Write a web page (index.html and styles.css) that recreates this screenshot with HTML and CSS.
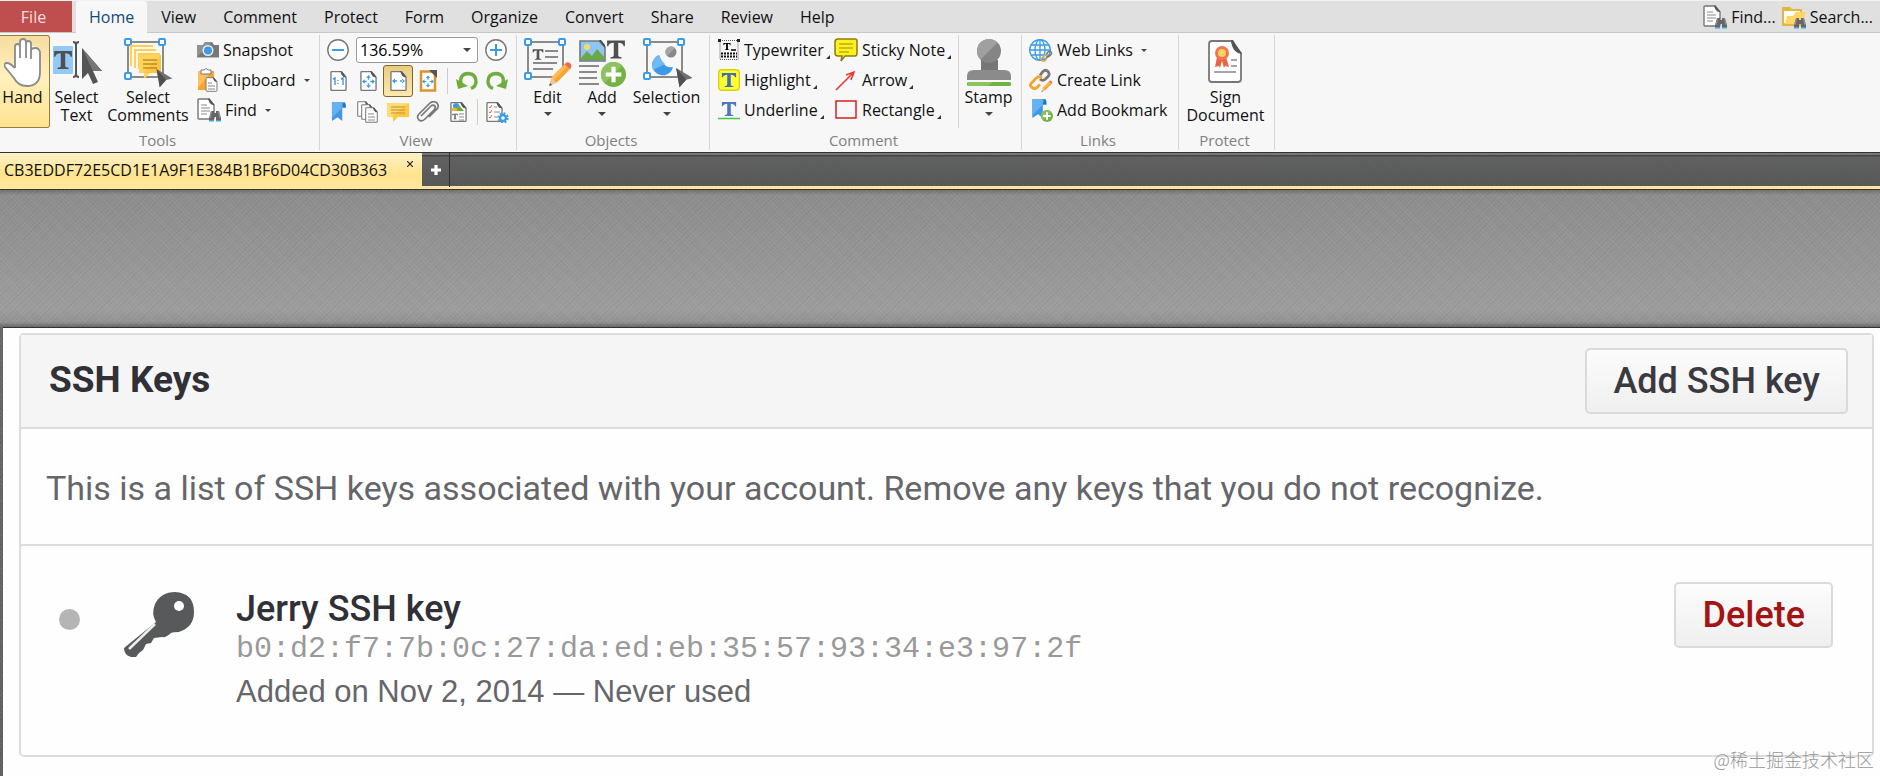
FILE: index.html
```
<!DOCTYPE html>
<html lang="en">
<head>
<meta charset="utf-8">
<title>SSH Keys</title>
<link rel="stylesheet" href="styles.css">
</head>
<body>
<svg class="defs" aria-hidden="true">
  <symbol id="page" viewBox="0 0 18 22"><path d="M1 2q0-1 1-1h10l5 6v13q0 1-1 1H2q-1 0-1-1z" fill="#fff" stroke="#777" stroke-width="1.4"/><path d="M11 .6h1.500L17.500 7q-5 1-6.500-6.400z" fill="#555"/></symbol>
  <symbol id="binoculars" viewBox="0 0 12 12"><path d="M2 1h3v2h2V1h3l2 7v2H7V7H5v3H0V8z" fill="#666"/><path d="M2.500 1.500L1 8M9.500 1.500L11 8" stroke="#999"/><path d="M0 10h5v1.500H0zM7 10h5v1.500H7z" fill="#4a9de0"/></symbol>
  <symbol id="find" viewBox="0 0 24 24"><use href="#page" x="0" y="0" width="18" height="22"/><path d="M4 7h6M4 10h9M4 13h9M4 16h6" stroke="#888"/><use href="#binoculars" x="12" y="12" width="12" height="12"/></symbol>
  <symbol id="frame" viewBox="0 0 44 44"><path d="M4 4h35v35H4z" fill="none" stroke="#8a8a8a" stroke-width="2"/><g fill="#fff" stroke="#3b9be8" stroke-width="2"><rect x="1" y="1" width="6" height="6" rx="1"/><rect x="35" y="1" width="6" height="6" rx="1"/><rect x="1" y="35" width="6" height="6" rx="1"/></g></symbol>
  <symbol id="arrows" viewBox="0 0 14 14"><g fill="#3b9be8"><path d="M7 0l2.500 3h-5zM7 14l2.500-3h-5zM0 7l3-2.500v5zM14 7l-3-2.500v5z"/><path d="M6.300 2h1.400v3H6.300zM6.300 9h1.400v3H6.300zM2 6.300h3v1.400H2zM9 6.300h3v1.400H9z"/></g></symbol>
  <symbol id="chain" viewBox="0 0 24 24"><g fill="none" stroke-width="3"><path d="M12 8l3-4q3-3 6 0 2 3 0 5l-3 3q-3 3-6 0" stroke="#777"/><path d="M14 11q-3-3-6 0l-5 5q-3 3 0 5 3 3 6 0l3-3" stroke="#f5a32a"/></g></symbol>
  <symbol id="pencil" viewBox="0 0 24 24"><path d="M3 16L16 3l5 5L8 21z" fill="#f8a32e"/><path d="M3 16L16 3l2.500 2.500-13 13z" fill="#ffb955"/><path d="M16 3q2-3 5-1 3 3 0 6z" fill="#ea6c4b"/><path d="M3 16l5 5-7 3z" fill="#e8c99a"/><path d="M2 21l2 2-3 1z" fill="#555"/></symbol>
  <symbol id="plus" viewBox="0 0 24 24"><circle cx="12" cy="12" r="12" fill="#74b243"/><path d="M3.500 20.500A12 12 0 0 1 20.500 3.500z" fill="#8cc262"/><path d="M12 4.500v15M4.500 12h15" stroke="#fff" stroke-width="4"/></symbol>
  <symbol id="ribbonmark" viewBox="0 0 16 21"><path d="M1 0h13q-2 2-2 5v15l-5-4-6 4z" fill="#3f97e6"/><path d="M1 0h11v6L1 17z" fill="#65b1f2"/><path d="M12 6q0-5 2-6 2 0 2 6z" fill="#2378c0"/></symbol>
  <symbol id="cursor" viewBox="0 0 20 24"><path d="M0 0l20 12-8 2-8 9z" fill="#707070"/><path d="M0 0l12 14-8 9z" fill="#505050"/></symbol>
  <symbol id="tletter" viewBox="0 0 18 18"><path d="M1 1h16v5h-1q-1-3-5-3v11q0 2 3 2v1H4v-1q3 0 3-2V3Q3 3 2 6H1z"/></symbol>
  <symbol id="undo" viewBox="0 0 22 22"><path d="M5 14Q3 4 12 3.500q8 .5 8 8 0 5-5 7" fill="none" stroke="#6fae3e" stroke-width="3.400"/><path d="M0 9l2 10 10-3z" fill="#6fae3e"/></symbol>
</svg>

<header class="app">
  <nav class="menubar">
    <button class="menu file">File</button>
    <button class="menu active">Home</button>
    <button class="menu">View</button>
    <button class="menu">Comment</button>
    <button class="menu">Protect</button>
    <button class="menu">Form</button>
    <button class="menu">Organize</button>
    <button class="menu">Convert</button>
    <button class="menu">Share</button>
    <button class="menu">Review</button>
    <button class="menu">Help</button>
    <div class="quick">
      <button class="tool"><svg width="24" height="24"><use href="#find"/></svg>Find...</button>
      <button class="tool"><svg width="24" height="24" viewBox="0 0 24 24"><path d="M0 2h8l2 2h10v17H0z" fill="#e5b53c"/><path d="M2 6h16v12H2z" fill="#fff"/><path d="M3 19l2-8h6l3-4h10l-4 12z" fill="#ffd564"/><use href="#binoculars" x="12" y="12" width="12" height="12"/></svg>Search...</button>
    </div>
  </nav>

  <div class="ribbon">
    <section class="group g-tools">
      <div class="body">
        <button class="big on"><svg width="38" height="50" viewBox="0 0 38 50"><path d="M11 27V8q0-3 2.500-3T16 8V4q0-3 3-3t3 3v3q0-3 2.500-3T27 7v4q0-3 2.500-3T32 11l3 0q1 4 1 8v15q0 14-13 14-9 0-13-8L1 28q-2-4 2-4 3 0 8 6z" fill="#fff"/><path d="M11 30V9q0-3 2.500-3T16 9v11V4q0-3 3-3t3 3v16V6q0-3 2.500-3T27 6v15-8q0-3 4-3t5 4v20q0 14-13 14-9 0-13-8L1 29q-2-4 2-4 3 0 8 5" fill="none" stroke="#8b8b8b" stroke-width="1.800"/></svg><span>Hand</span></button>
        <button class="big w-text"><svg width="50" height="50" viewBox="0 0 50 50"><rect x="1" y="8" width="20" height="28" rx="1" fill="#92c9f8"/><use href="#tletter" x="1" y="11" width="20" height="22" fill="#505050"/><path d="M21 4q3 0 3 3v29q0 3-3 3M27 4q-3 0-3 3v29q0 3 3 3" fill="none" stroke="#555" stroke-width="2"/><path d="M30 10l20 23-9 0 5 11-5 2-5-11-6 6z" fill="#555"/><path d="M30 10l20 23-9 0z" fill="#777"/></svg><span>Select<br>Text</span></button>
        <button class="big w-comm"><svg width="50" height="50" viewBox="0 0 50 50"><use href="#frame" x="1" y="0" width="44" height="44"/><path d="M8 28V8h22M12 30V12h21M16 31V16h21" fill="none" stroke="#ffcf50" stroke-width="2"/><path d="M16 17h22v18H27l-6 6v-6h-5z" fill="#ffd45c"/><path d="M38 17v18H20z" fill="#fbc545"/><path d="M20 22h14M20 26h14M20 30h14" stroke="#c48b20" stroke-width="1.500"/><use href="#cursor" x="33" y="31" width="17" height="19"/></svg><span>Select<br>Comments</span></button>
        <div class="rows">
          <button class="tool"><svg width="22" height="24" viewBox="0 0 22 24"><path d="M0 7h6l2-3h7l2 3h5v12H0z" fill="#777"/><path d="M0 7h6l2-3h7L0 19z" fill="#919191"/><path d="M0 19h22v1H0z" fill="#bbb"/><circle cx="11" cy="12.500" r="5.500" fill="#eee"/><circle cx="11" cy="12.500" r="4" fill="#3b9be8"/></svg>Snapshot</button>
          <button class="tool"><svg width="22" height="24" viewBox="0 0 22 24"><path d="M1 3h16v19H1z" fill="#f6a52f"/><path d="M1 3h14L1 20z" fill="#ffbf5a"/><path d="M4 2h3q2-3 4 0h3v4H4z" fill="#fff" stroke="#777"/><use href="#page" x="8" y="9" width="13" height="15"/><path d="M11 15h4M11 18h7M11 21h7" stroke="#888"/></svg>Clipboard<i class="drop"></i></button>
          <button class="tool"><svg width="24" height="24"><use href="#find"/></svg>Find<i class="drop"></i></button>
        </div>
      </div>
      <h2>Tools</h2>
    </section>

    <section class="group g-view">
      <div class="body view">
        <div class="line first">
          <button class="ic" aria-label="Zoom out"><svg width="22" height="22" viewBox="0 0 22 22"><circle cx="11" cy="11" r="10.200" fill="#fff" stroke="#777" stroke-width="1.400"/><path d="M5 11h12" stroke="#3b9be8" stroke-width="2"/></svg></button>
          <label class="zoom"><input aria-label="Zoom level" value="136.59%"><i class="drop"></i></label>
          <button class="ic" aria-label="Zoom in"><svg width="22" height="22" viewBox="0 0 22 22"><circle cx="11" cy="11" r="10.200" fill="#fff" stroke="#777" stroke-width="1.400"/><path d="M5 11h12M11 5v12" stroke="#3b9be8" stroke-width="2"/></svg></button>
        </div>
        <div class="line second">
          <button class="ic" aria-label="Actual size"><svg width="22" height="22" viewBox="0 0 22 22"><use href="#page" x="3" y="0" width="17" height="22"/><path d="M6 9l2-1v7M14 9l2-1v7M11 10v1M11 13v1" fill="none" stroke="#3b9be8" stroke-width="1.400"/></svg></button>
          <button class="ic" aria-label="Fit page"><svg width="22" height="22" viewBox="0 0 22 22"><use href="#page" x="3" y="0" width="17" height="22"/><use href="#arrows" x="5" y="5" width="13" height="13"/></svg></button>
          <button class="ic pressed" aria-label="Fit width"><svg width="22" height="22" viewBox="0 0 22 22"><use href="#page" x="3" y="0" width="17" height="22"/><path d="M5 11l3-2.500v5zM18 11l-3-2.500v5zM7 10.300h3v1.400H7zM13 10.300h3v1.400h-3z" fill="#3b9be8"/></svg></button>
          <button class="ic" aria-label="Fit visible"><svg width="22" height="22" viewBox="0 0 22 22"><path d="M4 1.500h14v19H4z" fill="#fff" stroke="#dd942e" stroke-width="2.500"/><path d="M12 0h8v8z" fill="#555"/><use href="#arrows" x="5" y="5" width="12" height="13"/></svg></button>
          <i class="vsep"></i>
          <button class="ic" aria-label="Rotate left"><svg width="22" height="22"><use href="#undo"/></svg></button>
          <button class="ic" aria-label="Rotate right"><svg width="22" height="22" viewBox="0 0 22 22"><g transform="matrix(-1 0 0 1 22 0)"><use href="#undo" width="22" height="22"/></g></svg></button>
        </div>
        <div class="line third">
          <button class="ic" aria-label="Bookmarks"><svg width="22" height="22" viewBox="0 0 22 22"><use href="#ribbonmark" x="4" y="1" width="15" height="20"/></svg></button>
          <button class="ic" aria-label="Thumbnails"><svg width="22" height="22" viewBox="0 0 22 22"><use href="#page" x="0" y="0" width="13" height="16"/><use href="#page" x="4" y="3" width="13" height="16"/><use href="#page" x="8" y="6" width="13" height="16"/><path d="M11 13h6M11 16h7M11 19h7" stroke="#888"/></svg></button>
          <button class="ic" aria-label="Comments"><svg width="22" height="22" viewBox="0 0 22 22"><path d="M0 2h22v14H11l-5 5v-5H0z" fill="#ffc83e"/><path d="M0 2h22L4 16H0z" fill="#ffdb75"/><path d="M4 6h14M4 9h14M4 12h14" stroke="#c0902c" stroke-width="1.200"/></svg></button>
          <button class="ic" aria-label="Attachments"><svg width="24" height="22" viewBox="0 0 24 22"><path d="M5 15L15 5q2-2 4 0 1 2-1 4L9 18q-3 3-6 1-3-3 0-6L13 3q4-4 8-1 3 4-1 7l-7 7" fill="none" stroke="#777" stroke-width="1.700"/></svg></button>
          <button class="ic" aria-label="Content"><svg width="22" height="22" viewBox="0 0 22 22"><use href="#page" x="3" y="0" width="17" height="22"/><circle cx="9" cy="5" r="3" fill="#3b9be8"/><path d="M7 10l5-6 5 6z" fill="#6fae3e"/><path d="M5 7h5v3H5z" fill="#f5b32a"/><use href="#tletter" x="5" y="12" width="6" height="7" fill="#555"/><path d="M12 13h5M12 16h5M12 19h5" stroke="#888"/></svg></button>
          <i class="vsep"></i>
          <button class="ic" aria-label="Properties"><svg width="24" height="22" viewBox="0 0 24 22"><use href="#page" x="1" y="0" width="17" height="22"/><path d="M4 6l1 1 2-3M4 11l1 1 2-3M4 16l1 1 2-3" fill="none" stroke="#ea5b3c"/><path d="M9 6h3M9 11h6M9 16h3" stroke="#888"/><circle cx="18" cy="17" r="3" fill="#fff" stroke="#3b9be8" stroke-width="2.400"/><circle cx="18" cy="17" r="4.800" fill="none" stroke="#3b9be8" stroke-width="1.800" stroke-dasharray="1.900 1.870"/></svg></button>
        </div>
      </div>
      <h2>View</h2>
    </section>

    <section class="group g-objects">
      <div class="body">
        <button class="big w-edit"><svg width="50" height="50" viewBox="0 0 50 50"><use href="#frame" x="1" y="0" width="44" height="44"/><use href="#tletter" x="9" y="10" width="12" height="13" fill="#555"/><path d="M22 13h13M22 19h13M10 25h24M10 31h20" stroke="#8a8a8a" stroke-width="2"/><path d="M25 47L45 24h5v26H25z" fill="#f7f7f7"/><use href="#pencil" x="25" y="23" width="25" height="25"/></svg><span>Edit</span><i class="drop"></i></button>
        <button class="big w-add"><svg width="50" height="50" viewBox="0 0 50 50"><path d="M3 3h19l6 6v14H3z" fill="#8ec5f2" stroke="#777" stroke-width="1.600"/><path d="M22 2h2l4 5v3z" fill="#444"/><circle cx="10" cy="9" r="3" fill="#ffd86b"/><path d="M4 20l6-7 5 5 5-7 7 8v3H4z" fill="#6aa84a"/><use href="#tletter" x="29" y="1" width="20" height="21" fill="#505050"/><path d="M2 28h20M2 34h18M2 40h18M2 46h20" stroke="#8a8a8a" stroke-width="2"/><use href="#plus" x="24" y="24" width="25" height="25"/></svg><span>Add</span><i class="drop"></i></button>
        <button class="big w-sel"><svg width="50" height="50" viewBox="0 0 50 50"><use href="#frame" x="1" y="0" width="44" height="44"/><path d="M17 17a10.500 10.500 0 1 0 14 12q-6 1-9-3t-5-9z" fill="#3b9be8"/><path d="M17 17q-10 6-6 15l12-6q-4-3-6-9z" fill="#71b9f3"/><circle cx="29" cy="14" r="5.500" fill="#888"/><path d="M25 18a5.500 5.500 0 0 1 8-8z" fill="#a5a5a5"/><use href="#cursor" x="34" y="30" width="17" height="20"/></svg><span>Selection</span><i class="drop"></i></button>
      </div>
      <h2>Objects</h2>
    </section>

    <section class="group g-comment">
      <div class="body">
        <div class="rows c1">
          <button class="tool"><svg width="22" height="24" viewBox="0 0 22 24"><path d="M2 2.500h18v19H2z" fill="none" stroke="#555" stroke-dasharray="1 1"/><path d="M0 1h3v3H0zM19 1h3v3h-3z" fill="#222"/><use href="#tletter" x="5" y="4" width="8" height="9"/><path d="M13 12h5" stroke="#000" stroke-width="1.500"/><path d="M3 15.500h16M3 18.500h16" stroke="#111" stroke-width="2" stroke-dasharray="2 1"/></svg>Typewriter<i class="more"></i></button>
          <button class="tool"><svg width="22" height="24" viewBox="0 0 22 24"><rect x=".7" y="1.700" width="20.600" height="20.600" rx="3" fill="#ff3" stroke="#d9d400" stroke-width="1.400"/><use href="#tletter" x="3" y="4" width="16" height="16" fill="#436cb4"/></svg>Highlight<i class="more"></i></button>
          <button class="tool"><svg width="22" height="24" viewBox="0 0 22 24"><use href="#tletter" x="3" y="3" width="16" height="16" fill="#4c76c0"/><path d="M0 20.500h22" stroke="#3cc83c" stroke-width="1.500"/></svg>Underline<i class="more"></i></button>
        </div>
        <div class="rows c2">
          <button class="tool"><svg width="24" height="24" viewBox="0 0 24 24"><path d="M4 1h17q2 0 2 2v12q0 3-2 3H11l-4 5 1-5H4q-3 0-3-3V4q0-3 3-3z" fill="#fff21c" stroke="#8a7c14" stroke-width="1.500"/><path d="M5 6h14M5 10h14M5 14h10" stroke="#9a8c20" stroke-width="1.200"/></svg>Sticky Note<i class="more"></i></button>
          <button class="tool"><svg width="24" height="24" viewBox="0 0 24 24"><path d="M2 22L20 4M12 7l8-3-3 8" fill="none" stroke="#e33" stroke-width="1.600"/></svg>Arrow<i class="more"></i></button>
          <button class="tool"><svg width="24" height="24" viewBox="0 0 24 24"><path d="M2 3h20v17H2z" fill="none" stroke="#d42222" stroke-width="1.500"/></svg>Rectangle<i class="more"></i></button>
        </div>
        <button class="big w-stamp"><svg width="50" height="50" viewBox="0 0 50 50"><path d="M17 22h17v10H17z" fill="#777"/><path d="M3 42v-4q0-6 7-6h30q7 0 7 6v4z" fill="#8b8b8b"/><circle cx="25" cy="13" r="12" fill="#858585"/><path d="M16.500 21.500A12 12 0 0 1 33.500 4.500z" fill="#a0a0a0"/><rect x="3" y="44" width="44" height="4" rx="1.500" fill="#71b144"/><path d="M4 44h25l-5 4H4z" fill="#8bc360"/></svg><span>Stamp</span><i class="drop"></i></button>
      </div>
      <h2>Comment</h2>
    </section>

    <section class="group g-links">
      <div class="body">
        <div class="rows">
          <button class="tool"><svg width="24" height="24" viewBox="0 0 24 24"><g fill="none" stroke="#3b9be8" stroke-width="1.300"><circle cx="11" cy="12" r="10.300"/><ellipse cx="11" cy="12" rx="5" ry="10.300"/><path d="M11 2v20M1 12h20M2 7h18M2 17h18"/></g><use href="#chain" x="11" y="12" width="13" height="12"/></svg>Web Links<i class="drop"></i></button>
          <button class="tool"><svg width="24" height="24" viewBox="0 0 24 24"><use href="#chain" x="0" y="0" width="22" height="22"/><use href="#pencil" x="12" y="12" width="12" height="12"/></svg>Create Link</button>
          <button class="tool"><svg width="24" height="24" viewBox="0 0 24 24"><use href="#ribbonmark" x="2" y="1" width="16" height="20"/><use href="#plus" x="12" y="12" width="12" height="12"/></svg>Add Bookmark</button>
        </div>
      </div>
      <h2>Links</h2>
    </section>

    <section class="group g-protect">
      <div class="body">
        <button class="big w-sign"><svg width="46" height="50" viewBox="3 0 46 50"><path d="M9 6q0-3 3-3h19l10 12v26q0 3-3 3H12q-3 0-3-3z" fill="#fff" stroke="#777" stroke-width="1.800"/><path d="M31 2h2l9 14q-10-1-11-14z" fill="#555"/><path d="M17 19l-2 10 4-1 1 2 2-7 2 7 1-2 4 1-3-10z" fill="#ea6546"/><circle cx="22" cy="15" r="5.500" fill="#ffd25c" stroke="#ef7355" stroke-width="3"/><path d="M31 22h6M31 28h6M14 34h22" stroke="#888" stroke-width="1.600"/></svg><span>Sign<br>Document</span></button>
      </div>
      <h2>Protect</h2>
    </section>
  </div>
</header>

<div class="doctabs">
  <div class="doctab"><span>CB3EDDF72E5CD1E1A9F1E384B1BF6D04CD30B363</span><button class="close" aria-label="Close tab"><svg width="6" height="6" viewBox="0 0 6 6"><path d="M0 0l6 6M6 0L0 6" stroke="#222" stroke-width="1.200"/></svg></button></div>
  <button class="newtab" aria-label="New tab"><svg width="10" height="10" viewBox="0 0 10 10"><path d="M5 0v10M0 5h10" stroke="#fff" stroke-width="3.200"/></svg></button>
</div>

<main class="workspace">
  <div class="sheet">
    <section class="panel">
      <div class="panel-head"><h1>SSH Keys</h1><button class="btn">Add SSH key</button></div>
      <p class="intro">This is a list of SSH keys associated with your account. Remove any keys that you do not recognize.</p>
      <div class="key">
        <i class="status"></i>
        <svg class="keyicon" width="74" height="68" viewBox="0 0 74 68"><path d="M34 31Q29 23 33 13 39 1 53 1q19 1 19 20 0 15-15 20-6 0-8 1-5 5-9 4l-8 1-3 5-5 1-3 6-4 3-3 4H9q-7-2-7-9z" fill="#58595b"/><circle cx="57" cy="15" r="5" fill="#fff"/><path d="M7 58L33 33" stroke="#eee" stroke-width="2.500"/></svg>
        <div class="info">
          <strong>Jerry SSH key</strong>
          <code>b0:d2:f7:7b:0c:27:da:ed:eb:35:57:93:34:e3:97:2f</code>
          <span>Added on Nov 2, 2014 — Never used</span>
        </div>
        <button class="btn danger">Delete</button>
      </div>
    </section>
    <div class="watermark">@稀土掘金技术社区</div>
  </div>
</main>
</body>
</html>
```
FILE: styles.css
```
* { box-sizing: border-box; }
body {
  margin: 0;
  min-height: 100vh;
  display: flex;
  flex-direction: column;
  overflow-x: hidden;
  font-family: "Open Sans", "Noto Sans", sans-serif;
  font-size: 16px;
  color: #111;
  background: #666;
}
.defs { position: absolute; width: 0; height: 0; }
button { font: inherit; color: inherit; border: 0; padding: 0; margin: 0; background: none; }
svg { display: block; flex: none; }
h1, h2, p { margin: 0; }

.menubar {
  display: flex;
  gap: 1px;
  height: 33px;
  background: #e0e0e0;
  border-top: 1px solid #f2f2f2;
  border-bottom: 1px solid #c8c8c8;
}
.menu { padding: 0 13px; line-height: 30px; }
.file { width: 72px; margin-right: 3px; background: #bf4e4e; color: #f7dede; padding-right: 18px; }
.active { height: 32px; background: #f7f7f7; color: #0f4a7c; border-radius: 3px 3px 0 0; }
.quick { display: flex; gap: 6px; margin-left: auto; padding-right: 7px; }

.tool { display: flex; align-items: center; gap: 4px; white-space: nowrap; line-height: 30px; }
.drop {
  flex: none;
  border: 3px solid transparent;
  border-top-color: #444;
  border-bottom: 0;
}
.tool .drop { margin-left: 4px; }
.more { border: 2px solid #333; border-top-color: transparent; border-left-color: transparent; margin-top: 14px; margin-left: -2px; }

.ribbon { display: flex; height: 119px; padding-top: 2px; background: #f7f7f7; }
.group {
  flex: none;
  display: flex;
  flex-direction: column;
  height: 115px;
  border-right: 1px solid #d5d5d5;
}
.body { display: flex; flex: none; height: 93px; }
.group h2 { font-size: 15px; font-weight: 400; line-height: 24px; color: #808080; text-align: center; padding-right: 4px; }
.g-tools { width: 320px; }
.g-view { width: 197px; }
.g-objects { width: 193px; }
.g-comment { width: 312px; }
.g-links { width: 157px; }
.g-protect { width: 96px; }
.rows { display: grid; grid-template-rows: repeat(3, 30px); justify-items: start; }
.big {
  display: flex;
  flex-direction: column;
  align-items: center;
  padding-top: 3px;
  text-align: center;
  line-height: 18px;
  white-space: nowrap;
}
.big .drop { margin-top: 6px; border-width: 4px; border-bottom: 0; }
.on { width: 50px; border: 1px solid #9a7c3a; border-left: 0; border-radius: 0 3px 3px 0; background: linear-gradient(#f6dda0, #fff0bd 45%, #ffe391); padding: 2px 4px 0 0; }
.w-text { width: 53px; }
.w-comm { width: 90px; }
.g-tools .rows { margin-left: 4px; }
.w-edit { width: 61px; }
.w-add { width: 48px; }
.w-sel { width: 81px; }
.g-comment .body { padding-left: 8px; }
.g-links .body { padding-left: 7px; }
.c1 { width: 116px; }
.c2 { width: 124px; }
.w-stamp { flex: 1; border-left: 1px solid #d5d5d5; padding-right: 3px; }
.w-sign { width: 93px; }

.view { flex-direction: column; padding: 0 5px 0 3px; }
.line { display: grid; align-items: center; justify-items: center; height: 32px; }
.first { grid-template-columns: 30px 1fr 30px; height: 30px; }
.second { grid-template-columns: repeat(4, 30px) 9px repeat(2, 30px); }
.third { grid-template-columns: repeat(5, 30px) 9px 30px; }
.line .ic { display: flex; }
.line .pressed { padding: 4px 3px; border: 1px solid #80642c; border-radius: 3px; background: linear-gradient(#e8cd80, #fbe9ac); }
.vsep { width: 1px; height: 26px; background: #ccc; }
.zoom { display: flex; align-items: center; width: 122px; height: 26px; padding: 0 6px 0 3px; border: 1px solid #999; border-radius: 3px; background: #fff; }
.zoom input { flex: 1; min-width: 0; border: 0; padding: 0; font: inherit; background: none; outline: 0; }
.zoom .drop { border-width: 4px; border-bottom: 0; }

.doctabs {
  display: flex;
  flex: none;
  height: 38px;
  border-top: 1px solid #333;
  border-bottom: 1px solid #3a3424;
  background:
    linear-gradient(#fae5a4, #fae5a4) bottom / 100% 3px no-repeat,
    linear-gradient(#303030, #303030) 0 33px / 100% 1px no-repeat,
    repeating-linear-gradient(45deg, rgba(255,255,255,.02) 0 1px, transparent 1px 3px),
    linear-gradient(#777 0 2px, #444 2px 3px, #606060 4px, #545555);
}
.doctab { display: flex; justify-content: space-between; width: 422px; padding: 0 9px 0 4px; line-height: 34px; background: linear-gradient(#fff1c8, #ffe38e 60%, #ffe7a0); }
.close { align-self: flex-start; padding-top: 8px; }
.newtab { display: grid; place-items: center; width: 28px; height: 34px; border-right: 1px solid #303030; }

.workspace {
  flex: 1;
  display: flex;
  padding: 137px 0 0 3px;
  background:
    repeating-linear-gradient(45deg, rgba(255,255,255,.05) 0 1px, transparent 1px 3px),
    repeating-linear-gradient(-45deg, rgba(0,0,0,.03) 0 1px, transparent 1px 4px),
    linear-gradient(#707070, #8c8c8c 5px, #9c9c9c 120px, #929292 132px, #666 137px, #606060);
}
.sheet {
  position: relative;
  flex: 1;
  padding: 5px 6px 17px 16px;
  border-top: 1px solid #333;
  background: #fefefe;
  font-family: Roboto, "Liberation Sans", Arial, sans-serif;
}
.panel { border: 2px solid #dcdcdc; border-radius: 5px; }
.panel-head { display: flex; align-items: center; justify-content: space-between; height: 94px; padding: 0 24px 0 28px; background: #f5f5f5; border-bottom: 2px solid #dcdcdc; }
.panel-head h1 { font-size: 37px; line-height: 40px; padding-bottom: 2px; color: #303036; }
.btn {
  height: 66px;
  padding: 0 26px;
  font-size: 36px;
  font-weight: 500;
  color: #3a3a40;
  white-space: nowrap;
  border: 2px solid #dadada;
  border-radius: 5px;
  background: linear-gradient(#fcfcfc, #efefef);
}
.danger { color: #a31515; }
.intro { padding: 39px 25px 36px; font-size: 34px; line-height: 40px; color: #66666a; border-bottom: 2px solid #dcdcdc; white-space: nowrap; }
.key { display: flex; align-items: flex-start; padding: 36px 39px 40px 38px; }
.status { width: 21px; height: 21px; margin: 27px 42px 0 0; border-radius: 50%; background: #b5b5b5; }
.keyicon { margin-top: 9px; }
.info { display: flex; flex: 1; flex-direction: column; margin-left: 40px; padding-top: 7px; }
.info strong { font-size: 36px; font-weight: 500; line-height: 40px; color: #303036; }
.info code { font-family: "Liberation Mono", monospace; font-size: 30px; line-height: 40px; color: #999; }
.info span { font-family: "Liberation Sans", Arial, sans-serif; font-size: 31px; line-height: 46px; color: #66666a; }
.watermark { position: absolute; right: 6px; bottom: 5px; font: 18px/24px "Noto Sans CJK SC", sans-serif; font-weight: 300; color: #999; }
```
